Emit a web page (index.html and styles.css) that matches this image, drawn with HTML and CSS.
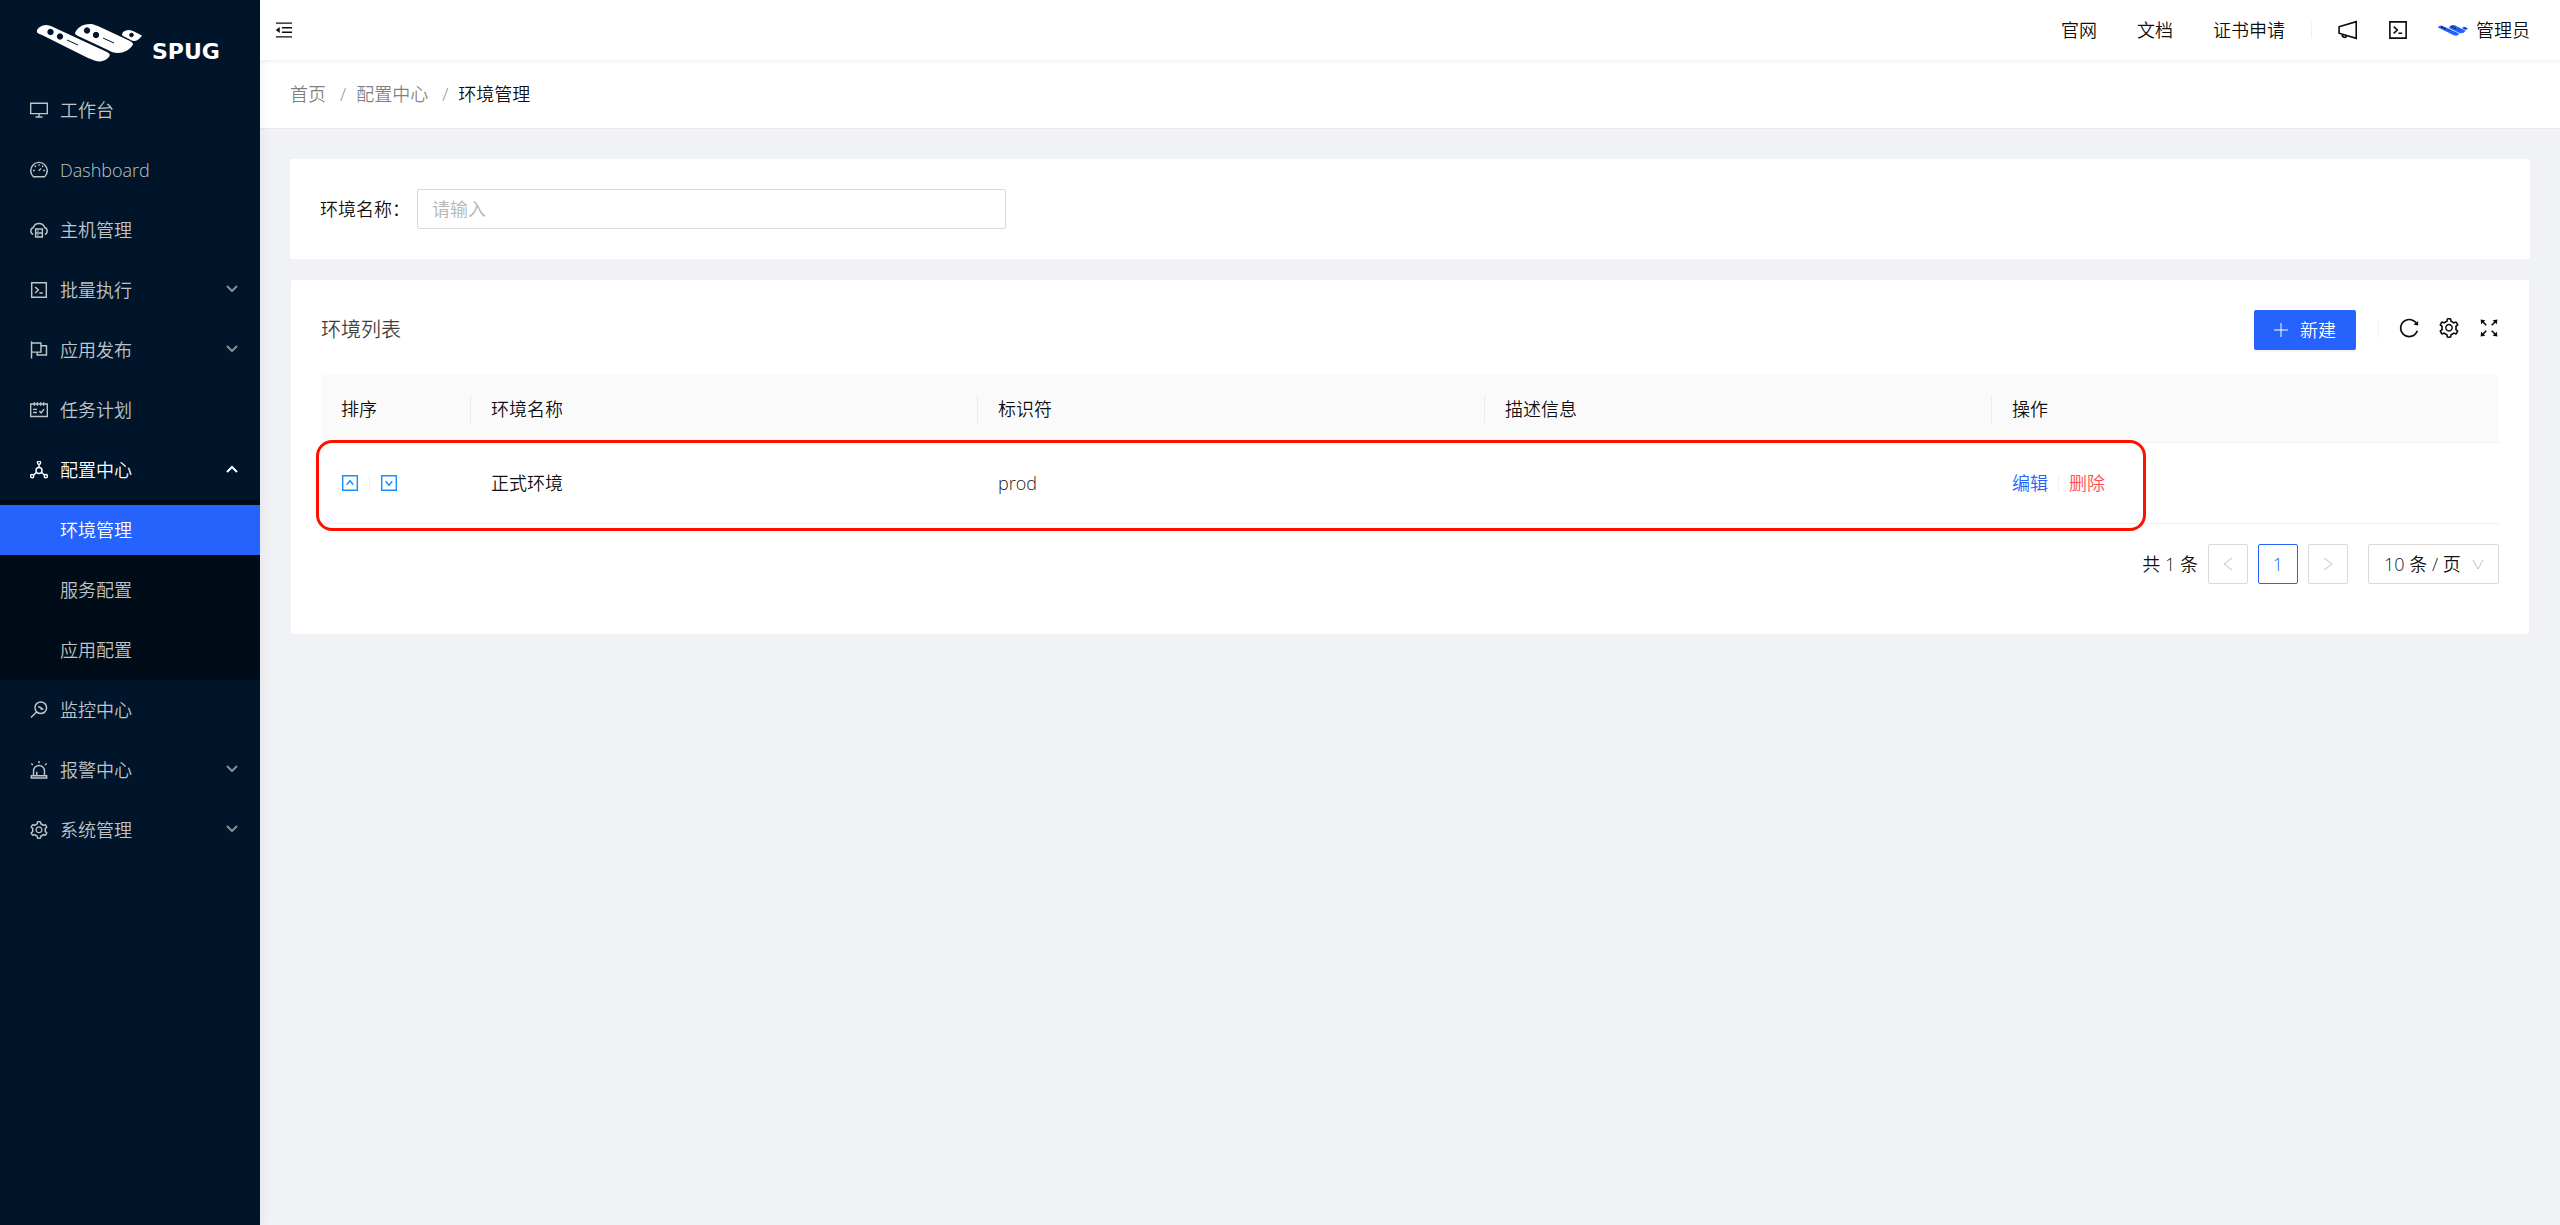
FILE: index.html
```html
<!DOCTYPE html>
<html lang="zh-CN">
<head>
    <meta charset="UTF-8">
    <meta name="viewport" content="width=device-width, initial-scale=1.0">
    <title>Spug</title>
    <link rel="stylesheet" href="styles.css">
</head>
<body>
    <!-- Icons -->
    <svg class="sprite" aria-hidden="true">
        <symbol id="i-logo" viewBox="0 0 106 38">
            <path fill="currentColor" d="M1 8C0 5 5 1 10 1c3 0 5 1 7 2l54 25c4 2 3 4 1 6-3 3-8 4-12 3-3-1-5-2-8-3L6 11C3 10 1 9 1 8z"/>
            <path fill="currentColor" d="M39 9C41 4 46 0 54 0c4 0 7 2 10 3l30 14c3 2 4 3 2 5-3 4-8 7-14 7-4 0-7-1-10-3L42 12c-2-1-3-2-3-3z"/>
            <path fill="currentColor" d="M86 10c1-3 4-4 7-4 2 0 4 1 6 2l6 3c1 0 1 1 0 2-2 2-4 4-7 4-2 0-3-1-5-2l-6-3c-1-1-1-1-1-2z"/>
            <g class="logo-hole">
                <circle cx="14.5" cy="8" r="2.7"/>
                <circle cx="24" cy="12.5" r="2.7"/>
                <circle cx="51" cy="6.5" r="2.7"/>
                <circle cx="60" cy="11" r="2.7"/>
                <circle cx="95.5" cy="11" r="1.8"/>
                <path d="M31 16l11 5M67 14l11 5"/>
            </g>
        </symbol>
        <symbol id="i-desktop" viewBox="64 64 896 896">
            <path class="line" d="M96 172h832v520H96zM512 692v160M336 860h352"/>
        </symbol>
        <symbol id="i-dashboard" viewBox="64 64 896 896">
            <path class="line" d="M232 848a412 412 0 1 1 560 0zM512 220v80M306 306l50 50M718 306l-50 50M212 540h88M724 540h88M500 552l112-112"/>
        </symbol>
        <symbol id="i-cloud" viewBox="64 64 896 896">
            <path class="line" d="M224 730a180 180 0 0 1 6-340 300 300 0 0 1 564 0 180 180 0 0 1 6 340M344 460h336v400H344zM344 660h336"/>
            <path class="line" d="M430 560h60M430 760h60"/>
        </symbol>
        <symbol id="i-code" viewBox="64 64 896 896">
            <path class="line" d="M148 148h728v728H148zM320 360l160 152-160 152M530 660h170"/>
        </symbol>
        <symbol id="i-flag" viewBox="64 64 896 896">
            <path class="line" d="M140 80v860M140 168h470v450H140M610 300h274v460H420V618"/>
        </symbol>
        <symbol id="i-schedule" viewBox="64 64 896 896">
            <path class="line" d="M96 210h832v624H96zM280 120v180M430 120v180M594 120v180M744 120v180M220 480h190M220 640h190M530 560l90 100 140-190"/>
        </symbol>
        <symbol id="i-deploy" viewBox="64 64 896 896">
            <circle class="line" cx="512" cy="150" r="80"/>
            <circle class="line" cx="512" cy="536" r="150"/>
            <circle class="line" cx="170" cy="820" r="80"/>
            <circle class="line" cx="854" cy="820" r="80"/>
            <path class="line" d="M512 230v156M392 626L232 770M632 626l160 144"/>
        </symbol>
        <symbol id="i-monitor" viewBox="64 64 896 896">
            <circle class="line" cx="600" cy="400" r="290"/>
            <path class="line" d="M390 610L110 890M470 350l130 40 20 70 110 10M600 390l80 60"/>
        </symbol>
        <symbol id="i-alert" viewBox="64 64 896 896">
            <path class="line" d="M240 800V560a272 272 0 0 1 544 0v240M130 800h764v110H130zM400 800V600M512 64v110M130 190l76 76M894 190l-76 76"/>
        </symbol>
        <symbol id="i-setting" viewBox="64 64 896 896">
            <path fill="currentColor" d="M924.8 625.7l-65.5-56c3.1-19 4.7-38.4 4.7-57.8s-1.6-38.8-4.7-57.8l65.5-56a32.03 32.03 0 009.3-35.2l-.9-2.6a443.74 443.74 0 00-79.7-137.9l-1.8-2.1a32.12 32.12 0 00-35.1-9.5l-81.3 28.9c-30-24.6-63.5-44-99.7-57.6l-15.7-85a32.05 32.05 0 00-25.8-25.7l-2.7-.5c-52.1-9.4-106.9-9.4-159 0l-2.7.5a32.05 32.05 0 00-25.8 25.7l-15.8 85.4a351.86 351.86 0 00-99 57.4l-81.9-29.1a32 32 0 00-35.1 9.5l-1.8 2.1a446.02 446.02 0 00-79.7 137.9l-.9 2.6c-4.5 12.5-.8 26.5 9.3 35.2l66.3 56.6c-3.1 18.8-4.6 38-4.6 57.1 0 19.2 1.5 38.4 4.6 57.1L99 625.5a32.03 32.03 0 00-9.3 35.2l.9 2.6c18.1 50.4 44.9 96.9 79.7 137.9l1.8 2.1a32.12 32.12 0 0035.1 9.5l81.9-29.1c29.8 24.5 63.1 43.9 99 57.4l15.8 85.4a32.05 32.05 0 0025.8 25.7l2.7.5a449.4 449.4 0 00159 0l2.7-.5a32.05 32.05 0 0025.8-25.7l15.7-85a350 350 0 0099.7-57.6l81.3 28.9a32 32 0 0035.1-9.5l1.8-2.1c34.8-41.1 61.6-87.5 79.7-137.9l.9-2.6c4.5-12.3.8-26.3-9.3-35zM788.3 465.9c2.5 15.1 3.8 30.6 3.8 46.1s-1.3 31-3.8 46.1l-6.6 40.1 74.7 63.9a370.03 370.03 0 01-42.6 73.6L721 702.8l-31.4 25.8c-23.9 19.6-50.5 35-79.3 45.8l-38.1 14.3-17.9 97a377.5 377.5 0 01-85 0l-17.9-97.2-37.8-14.5c-28.5-10.8-55-26.2-78.7-45.7l-31.4-25.9-93.4 33.2c-17-22.9-31.2-47.6-42.6-73.6l75.5-64.5-6.5-40c-2.4-14.9-3.7-30.3-3.7-45.5 0-15.3 1.2-30.6 3.7-45.5l6.5-40-75.5-64.5c11.3-26.1 25.6-50.7 42.6-73.6l93.4 33.2 31.4-25.9c23.7-19.5 50.2-34.9 78.7-45.7l37.9-14.3 17.9-97.2c28.1-3.2 56.8-3.2 85 0l17.9 97 38.1 14.3c28.7 10.8 55.4 26.2 79.3 45.8l31.4 25.8 92.8-32.9c17 22.9 31.2 47.6 42.6 73.6L781.8 426l6.5 39.9zM512 326c-97.2 0-176 78.8-176 176s78.8 176 176 176 176-78.8 176-176-78.8-176-176-176zm79.2 255.2A111.6 111.6 0 01512 614c-29.9 0-58-11.7-79.2-32.8A111.6 111.6 0 01400 502c0-29.9 11.7-58 32.8-79.2C454 401.6 482.1 390 512 390c29.9 0 58 11.6 79.2 32.8A111.6 111.6 0 01624 502c0 29.9-11.7 58-32.8 79.2z"/>
        </symbol>
        <symbol id="i-fold" viewBox="64 64 896 896">
            <path class="line" d="M110 170h804M408 396h506M408 628h506M110 854h804"/>
            <path fill="currentColor" d="M100 512l200-150v300z"/>
        </symbol>
        <symbol id="i-sound" viewBox="64 64 896 896">
            <path class="line" d="M112 370l768-232v748L112 654zM260 710a100 100 0 0 0 200 50"/>
        </symbol>
        <symbol id="i-reload" viewBox="64 64 896 896">
            <path fill="currentColor" d="M909.1 209.3l-56.4 44.1C775.8 155.1 656.2 92 521.9 92 290 92 102.3 279.5 102 511.5 101.7 743.7 289.8 932 521.9 932c181.3 0 335.8-115 394.6-276.1 1.5-4.2-.7-8.9-4.9-10.3l-56.7-19.5a8 8 0 00-10.1 4.8c-1.8 5-3.8 10-5.9 14.9-17.3 41-42.1 77.8-73.7 109.4A344.77 344.77 0 01655.9 829c-42.3 17.9-87.4 27-133.8 27-46.5 0-91.5-9.1-133.8-27A341.5 341.5 0 01279 755.2a342.16 342.16 0 01-73.7-109.4c-17.9-42.4-27-87.4-27-133.9s9.1-91.5 27-133.9c17.3-41 42.1-77.8 73.7-109.4 31.6-31.6 68.4-56.4 109.3-73.8 42.3-17.9 87.4-27 133.8-27 46.5 0 91.5 9.1 133.8 27a341.5 341.5 0 01109.3 73.8c9.9 9.9 19.2 20.4 27.8 31.4l-60.2 47a8 8 0 003 14.1l175.6 43c5 1.2 9.9-2.6 9.9-7.7l.8-180.9c-.1-6.6-7.8-10.3-13-6.2z"/>
        </symbol>
        <symbol id="i-fullscreen" viewBox="64 64 896 896">
            <path class="line" d="M390 390L200 200M634 390l190-190M390 634L200 824M634 634l190 190"/>
            <path fill="currentColor" d="M136 136l210 26-184 184zM888 136l-210 26 184 184zM136 888l210-26-184-184zM888 888l-210-26 184-184z"/>
        </symbol>
        <symbol id="i-up-square" viewBox="64 64 896 896">
            <path class="line" d="M148 148h728v728H148zM350 600l162-200 162 200"/>
        </symbol>
        <symbol id="i-down-square" viewBox="64 64 896 896">
            <path class="line" d="M148 148h728v728H148zM350 424l162 200 162-200"/>
        </symbol>
        <symbol id="i-plus" viewBox="0 0 14 14">
            <path d="M7 0v14M0 7h14" fill="none" stroke="currentColor"/>
        </symbol>
        <symbol id="i-down" viewBox="0 0 12 12">
            <path d="M1 2l5 5 5-5" fill="none" stroke="currentColor" stroke-width="2"/>
        </symbol>
        <symbol id="i-up" viewBox="0 0 12 12">
            <path d="M1 8l5-5 5 5" fill="none" stroke="currentColor" stroke-width="2"/>
        </symbol>
        <symbol id="i-angle-down" viewBox="0 0 12 12">
            <path d="M1 1l5 9 5-9" fill="none" stroke="currentColor"/>
        </symbol>
        <symbol id="i-angle-left" viewBox="0 0 12 14">
            <path d="M10 1L2 7l8 6" fill="none" stroke="currentColor"/>
        </symbol>
        <symbol id="i-angle-right" viewBox="0 0 12 14">
            <path d="M2 1l8 6-8 6" fill="none" stroke="currentColor"/>
        </symbol>
    </svg>

    <div class="layout">
        <!-- Sidebar -->
        <aside class="sidebar">
            <div class="logo">
                <svg class="logo-mark"><use href="#i-logo"/></svg>
                <span class="logo-text">SPUG</span>
            </div>
            <nav class="menu">
                <a class="menu-item" href="#"><svg class="icon"><use href="#i-desktop"/></svg>工作台</a>
                <a class="menu-item" href="#"><svg class="icon"><use href="#i-dashboard"/></svg>Dashboard</a>
                <a class="menu-item" href="#"><svg class="icon"><use href="#i-cloud"/></svg>主机管理</a>
                <a class="menu-item" href="#"><svg class="icon"><use href="#i-code"/></svg>批量执行<svg class="arrow"><use href="#i-down"/></svg></a>
                <a class="menu-item" href="#"><svg class="icon"><use href="#i-flag"/></svg>应用发布<svg class="arrow"><use href="#i-down"/></svg></a>
                <a class="menu-item" href="#"><svg class="icon"><use href="#i-schedule"/></svg>任务计划</a>
                <a class="menu-item open" href="#"><svg class="icon"><use href="#i-deploy"/></svg>配置中心<svg class="arrow"><use href="#i-up"/></svg></a>
                <div class="submenu">
                    <a class="menu-item active" href="#">环境管理</a>
                    <a class="menu-item" href="#">服务配置</a>
                    <a class="menu-item" href="#">应用配置</a>
                </div>
                <a class="menu-item" href="#"><svg class="icon"><use href="#i-monitor"/></svg>监控中心</a>
                <a class="menu-item" href="#"><svg class="icon"><use href="#i-alert"/></svg>报警中心<svg class="arrow"><use href="#i-down"/></svg></a>
                <a class="menu-item" href="#"><svg class="icon"><use href="#i-setting"/></svg>系统管理<svg class="arrow"><use href="#i-down"/></svg></a>
            </nav>
        </aside>

        <div class="main">
            <!-- Header -->
            <header class="header">
                <button class="icon-button" type="button" aria-label="收起菜单"><svg class="icon"><use href="#i-fold"/></svg></button>
                <div class="header-right">
                    <nav class="header-links">
                        <a href="#">官网</a>
                        <a href="#">文档</a>
                        <a href="#">证书申请</a>
                    </nav>
                    <span class="divider"></span>
                    <div class="header-tools">
                        <button class="icon-button" type="button" aria-label="通知"><svg class="icon-large"><use href="#i-sound"/></svg></button>
                        <button class="icon-button" type="button" aria-label="终端"><svg class="icon-large"><use href="#i-code"/></svg></button>
                        <a class="user" href="#"><svg class="avatar"><use href="#i-logo"/></svg>管理员</a>
                    </div>
                </div>
            </header>

            <nav class="breadcrumb">
                <a href="#">首页</a>
                <span class="separator">/</span>
                <a href="#">配置中心</a>
                <span class="separator">/</span>
                <span class="current">环境管理</span>
            </nav>

            <main class="content">
                <!-- Search form -->
                <form class="card search-form">
                    <label for="env-name">环境名称：</label>
                    <input type="text" id="env-name" placeholder="请输入">
                </form>

                <!-- Environment table -->
                <section class="card table-card">
                    <div class="toolbar">
                        <h2>环境列表</h2>
                        <button class="add-button" type="button"><svg class="plus"><use href="#i-plus"/></svg>新建</button>
                        <span class="divider"></span>
                        <div class="toolbar-icons">
                            <button class="icon-button" type="button" aria-label="刷新"><svg class="icon-large"><use href="#i-reload"/></svg></button>
                            <button class="icon-button" type="button" aria-label="列设置"><svg class="icon-large"><use href="#i-setting"/></svg></button>
                            <button class="icon-button" type="button" aria-label="全屏"><svg class="icon-large"><use href="#i-fullscreen"/></svg></button>
                        </div>
                    </div>

                    <div class="table-wrap">
                        <table>
                            <thead>
                                <tr>
                                    <th class="sort-column">排序</th>
                                    <th>环境名称</th>
                                    <th>标识符</th>
                                    <th>描述信息</th>
                                    <th>操作</th>
                                </tr>
                            </thead>
                            <tbody>
                                <tr>
                                    <td>
                                        <div class="actions">
                                            <button class="icon-button sort-button" type="button" aria-label="上移"><svg class="icon"><use href="#i-up-square"/></svg></button>
                                            <span class="divider"></span>
                                            <button class="icon-button sort-button" type="button" aria-label="下移"><svg class="icon"><use href="#i-down-square"/></svg></button>
                                        </div>
                                    </td>
                                    <td>正式环境</td>
                                    <td>prod</td>
                                    <td></td>
                                    <td>
                                        <div class="actions">
                                            <a class="edit" href="#">编辑</a>
                                            <span class="divider"></span>
                                            <a class="delete" href="#">删除</a>
                                        </div>
                                    </td>
                                </tr>
                            </tbody>
                        </table>
                        <div class="highlight"></div>
                    </div>

                    <div class="pagination">
                        <span class="total">共 1 条</span>
                        <button class="page" type="button" disabled aria-label="上一页"><svg class="page-arrow"><use href="#i-angle-left"/></svg></button>
                        <button class="page current-page" type="button">1</button>
                        <button class="page" type="button" disabled aria-label="下一页"><svg class="page-arrow"><use href="#i-angle-right"/></svg></button>
                        <div class="page-size">
                            <select aria-label="每页条数">
                                <option>10 条 / 页</option>
                                <option>20 条 / 页</option>
                                <option>50 条 / 页</option>
                            </select>
                            <svg class="select-arrow"><use href="#i-angle-down"/></svg>
                        </div>
                    </div>
                </section>
            </main>
        </div>
    </div>
</body>
</html>
```
FILE: styles.css
```css
* {
    box-sizing: border-box;
}

body {
    margin: 0;
    font-family: "Open Sans", "Noto Sans CJK SC", sans-serif;
    font-size: 18px;
    font-weight: 350;
    line-height: 26px;
    color: rgba(0, 0, 0, 0.95);
    background-color: #f0f2f5;
}

a {
    color: inherit;
    text-decoration: none;
}

button,
input,
select {
    font: inherit;
    color: inherit;
}

svg {
    display: block;
    flex-shrink: 0;
}

.sprite {
    position: absolute;
    width: 0;
    height: 0;
}

.line {
    fill: none;
    stroke: currentColor;
    stroke-width: 72;
}

.icon {
    width: 18px;
    height: 18px;
}

.icon-large {
    width: 20px;
    height: 20px;
}

.icon-button {
    padding: 0;
    border: none;
    background: none;
    cursor: pointer;
}

.divider {
    width: 1px;
    height: 16px;
    background-color: #f0f0f0;
}

.layout {
    display: flex;
    min-height: 100vh;
}

/* Sidebar */
.sidebar {
    position: relative;
    flex: 0 0 260px;
    background-color: #001529;
    color: rgba(255, 255, 255, 0.75);
    box-shadow: 2px 0 10px rgba(29, 35, 41, 0.05);
}

.logo {
    display: flex;
    align-items: flex-end;
    gap: 10px;
    height: 80px;
    padding: 0 0 18px 36px;
    color: #fff;
}

.logo-mark {
    width: 106px;
    height: 38px;
}

.logo-hole {
    fill: #001529;
    stroke: #001529;
    stroke-width: 1;
}

.logo-text {
    font-family: "DejaVu Sans", sans-serif;
    font-size: 22px;
    font-weight: bold;
    line-height: 20px;
}

.menu {
    display: flow-root;
    margin-top: -5px;
}

.menu-item {
    display: flex;
    align-items: center;
    gap: 12px;
    height: 50px;
    margin: 10px 0;
    padding: 0 22px 0 30px;
}

.menu-item:hover,
.menu-item.open {
    color: #fff;
}

.menu-item.open {
    margin-bottom: 5px;
}

.arrow {
    width: 12px;
    height: 12px;
    margin-left: auto;
    opacity: 0.7;
}

.open .arrow {
    opacity: 1;
}

.submenu {
    display: flow-root;
    padding: 5px 0;
    background-color: #000c17;
}

.submenu .menu-item {
    margin: 0 0 10px;
    padding-left: 60px;
}

.submenu .menu-item:last-child {
    margin-bottom: 0;
}

.submenu + .menu-item {
    margin-top: 5px;
}

.submenu .active {
    background-color: #2563fc;
    color: #fff;
}

/* Header */
.main {
    flex: 1;
    min-width: 0;
}

.header {
    position: relative;
    display: flex;
    align-items: center;
    justify-content: space-between;
    height: 60px;
    padding: 0 30px 0 15px;
    background-color: #fff;
    box-shadow: 0 1px 5px rgba(0, 21, 41, 0.08);
}

.header-right,
.header-links,
.header-tools,
.user {
    display: flex;
    align-items: center;
}

.header-links {
    gap: 40px;
}

.header-right {
    gap: 26px;
}

.header-tools {
    gap: 30px;
}

.user {
    gap: 8px;
}

.avatar {
    width: 30px;
    height: 11px;
    color: #2563fc;
}

.avatar .logo-hole {
    fill: #fff;
}

.breadcrumb {
    display: flex;
    align-items: center;
    height: 69px;
    padding: 0 30px;
    border-bottom: 1px solid #e8e8e8;
    background-color: #fff;
    color: rgba(0, 0, 0, 0.5);
}

.separator {
    margin: 0 10px 0 14px;
}

.breadcrumb .current {
    color: rgba(0, 0, 0, 0.95);
}

/* Content */
.content {
    padding: 30px;
}

.card {
    padding: 30px;
    border-radius: 2px;
    background-color: #fff;
}

.search-form {
    display: flex;
    align-items: center;
    gap: 7px;
    margin-bottom: 21px;
}

.search-form input {
    width: 27%;
    height: 40px;
    padding: 0 14px;
    border: 1px solid #d9d9d9;
    border-radius: 2px;
    outline: none;
}

.search-form input::placeholder {
    color: #b5b5b5;
}

.table-card {
    margin: 0 1px;
    padding-bottom: 50px;
}

.toolbar {
    display: flex;
    align-items: center;
    height: 40px;
    margin-bottom: 25px;
}

.toolbar h2 {
    margin: 0 auto 0 0;
    font-size: 20px;
    font-weight: 350;
    color: rgba(0, 0, 0, 0.75);
}

.add-button {
    display: flex;
    align-items: center;
    gap: 12px;
    height: 40px;
    margin-right: 22px;
    padding: 0 20px;
    border: none;
    border-radius: 2px;
    background-color: #2563fc;
    box-shadow: 0 2px 0 rgba(0, 0, 0, 0.04);
    color: #fff;
    cursor: pointer;
}

.plus {
    width: 14px;
    height: 14px;
}

.toolbar-icons {
    display: flex;
    gap: 20px;
    margin-left: 20px;
    padding-bottom: 4px;
}

.table-wrap {
    position: relative;
}

table {
    width: 100%;
    border-spacing: 0;
    table-layout: fixed;
}

th,
td {
    padding: 0 20px;
    border-bottom: 1px solid #f0f0f0;
    text-align: left;
}

th {
    position: relative;
    height: 68px;
    background-color: #fafafa;
    font-weight: 350;
}

th:not(:last-child)::after {
    content: "";
    position: absolute;
    top: 20px;
    right: 0;
    width: 1px;
    height: 28px;
    background-color: #ebebeb;
}

td {
    height: 81px;
}

.sort-column {
    width: 150px;
}

.actions {
    display: flex;
    align-items: center;
    gap: 10px;
}

.sort-button {
    color: #1890ff;
}

.edit {
    color: #2563fc;
}

.delete {
    color: #ff4d4f;
}

/* Frame drawn over the row */
.highlight {
    position: absolute;
    top: 65px;
    bottom: -7px;
    left: -5px;
    width: 84%;
    border: 3px solid #ff1100;
    border-radius: 16px;
    pointer-events: none;
}

/* Pagination */
.pagination {
    display: flex;
    align-items: center;
    justify-content: flex-end;
    gap: 10px;
    margin-top: 20px;
}

.page {
    display: flex;
    align-items: center;
    justify-content: center;
    width: 40px;
    height: 40px;
    padding: 0;
    border: 1px solid #d9d9d9;
    border-radius: 2px;
    background-color: #fff;
    color: #bfbfbf;
}

.page-arrow {
    width: 12px;
    height: 14px;
}

.current-page {
    border-color: #2563fc;
    color: #2563fc;
}

.page-size {
    position: relative;
    margin-left: 10px;
}

.page-size select {
    display: block;
    width: 131px;
    height: 40px;
    padding: 0 15px;
    border: 1px solid #d9d9d9;
    border-radius: 2px;
    appearance: none;
    background-color: #fff;
}

.select-arrow {
    position: absolute;
    top: 15px;
    right: 15px;
    width: 12px;
    height: 12px;
    color: #bfbfbf;
    pointer-events: none;
}
```
